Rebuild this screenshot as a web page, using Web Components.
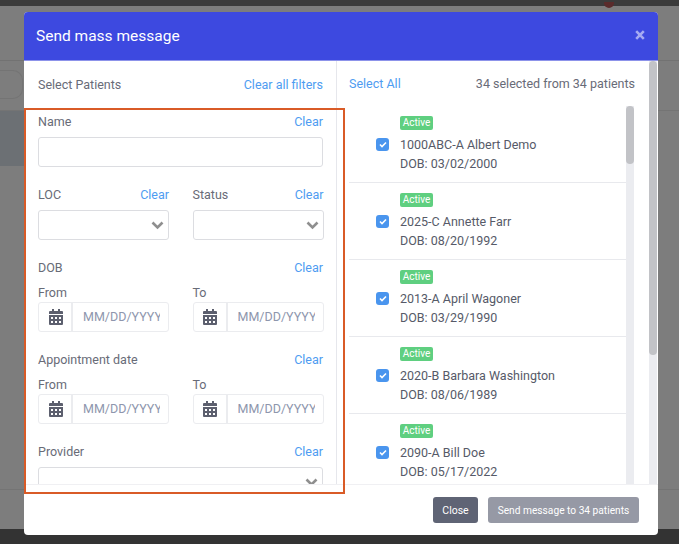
<!DOCTYPE html>
<html>
<head>
<meta charset="utf-8">
<style>
  html, body { margin: 0; padding: 0; }
  body { font-family: Roboto, "Liberation Sans", sans-serif; font-size: 12.5px; color: #686b77; }
</style>
</head>
<body>
<mass-page>
  <mass-modal>
    <filter-field slot="name-field" label="Name"><select-box plain></select-box></filter-field>
    <filter-field slot="pair-fields" label="LOC"><select-box></select-box></filter-field>
    <filter-field slot="pair-fields" label="Status"><select-box></select-box></filter-field>
    <filter-field slot="rest" label="DOB"><date-range></date-range></filter-field>
    <filter-field slot="rest" label="Appointment date"><date-range></date-range></filter-field>
    <filter-field slot="rest" label="Provider"><select-box></select-box></filter-field>
    <patient-row slot="patients" code="1000ABC-A Albert Demo" dob="03/02/2000"></patient-row>
    <patient-row slot="patients" code="2025-C Annette Farr" dob="08/20/1992"></patient-row>
    <patient-row slot="patients" code="2013-A April Wagoner" dob="03/29/1990"></patient-row>
    <patient-row slot="patients" code="2020-B Barbara Washington" dob="08/06/1989"></patient-row>
    <patient-row slot="patients" code="2090-A Bill Doe" dob="05/17/2022"></patient-row>
  </mass-modal>
</mass-page>

<script>
// dimmed page behind the dialog
class MassPage extends HTMLElement {
  constructor() {
    super()
    this.attachShadow({mode: "open"}).innerHTML = `
    <style>
      :host { display: flex; flex-direction: column; position: relative; width: 679px; height: 544px; overflow: hidden; background: #7d7d7d; }
      .top { height: 6px; flex: none; background: #3b3b3b; }
      .row1 { height: 54px; flex: none; border-bottom: 1px solid #727272; }
      .row2 { height: 40px; flex: none; border-bottom: 1px solid #747474; padding-top: 9px; box-sizing: content-box; }
      .pill { width: 23px; height: 29px; box-sizing: border-box; border: 1px solid #747474; border-left: 0; border-radius: 0 10px 10px 0; }
      .row3 { height: 55px; width: 24px; flex: none; background: #6c7074; }
      .fill { flex: 1; }
      .row4 { height: 39px; flex: none; border-top: 1px solid #747474; }
      .bottom { height: 15px; flex: none; background: #333; }
      .dot { position: absolute; top: 2px; left: 604px; width: 10px; height: 6px; border-radius: 0 0 5px 5px; background: #5a2b2b; }
    </style>
    <div class="top"></div>
    <div class="row1"></div>
    <div class="row2"><div class="pill"></div></div>
    <div class="row3"></div>
    <div class="fill"></div>
    <div class="row4"></div>
    <div class="bottom"></div>
    <div class="dot"></div>
    <slot></slot>
    `
  }
}

class MassModal extends HTMLElement {
  constructor() {
    super()
    this.attachShadow({mode: "open"}).innerHTML = `
    <style>
      * { box-sizing: border-box; }
      :host { display: flex; flex-direction: column; position: absolute; left: 24px; top: 12px; width: 634px; height: 523px; background: #fff; border-radius: 4px; overflow: hidden; }
      a { color: #4e9cf1; }
      header { height: 49px; flex: none; background: #3d49e0; color: #fff; font-size: 15.5px; display: flex; justify-content: space-between; align-items: center; padding: 0 13px 0 12px; border-bottom: 1px solid #8d93ea; }
      header svg { display: block; margin-top: -3px; }
      main { flex: 1; min-height: 0; display: flex; }
      .left { width: 313px; flex: none; border-right: 1px solid #e6e7ec; display: flex; flex-direction: column; }
      .bar { height: 47px; flex: none; display: flex; justify-content: space-between; align-items: center; }
      .left .bar { padding: 0 13px 1px 14px; }
      .filters { flex: 1; min-height: 0; overflow: hidden; padding: 3px 13px 0 14px; }
      .pair { display: grid; grid-template-columns: 131px 131px; gap: 23.5px; }
      .right { flex: 1; min-width: 0; display: flex; flex-direction: column; }
      .right .bar { height: 45px; padding: 0 14px 0 12px; }
      .list-wrap { flex: 1; min-height: 0; display: flex; }
      .list { width: 277px; margin-left: 12px; overflow: hidden; flex: none; }
      .track { width: 8px; flex: none; background: #ebecf0; }
      .track i { display: block; height: 58px; border-radius: 4px; background: #c2c3c7; }
      .outer { width: 8px; margin-right: 1px; flex: none; background: #ebecf0; }
      .outer i { display: block; height: 294px; border-radius: 4px; background: #c2c3c7; }
      footer { height: 51px; flex: none; border-top: 1px solid #f0f0f3; display: flex; justify-content: flex-end; align-items: flex-start; gap: 10px; padding: 12px 19px 0 0; }
      .btn { height: 26px; border-radius: 3px; color: #fff; font-size: 10.5px; white-space: nowrap; display: flex; align-items: center; justify-content: center; }
      .close { width: 45px; background: #5f6475; }
      .send { width: 151px; background: #9699a5; font-size: 10.2px; }
      .orange { position: absolute; left: 0; top: 96px; width: 321px; height: 386px; border: 2px solid #d95b27; pointer-events: none; }
    </style>
    <header>
      <span>Send mass message</span>
      <svg width="10" height="10" viewBox="0 0 10 10"><path d="M1.2 1.2l7.6 7.6M8.8 1.2l-7.6 7.6" stroke="#a5aaf2" stroke-width="2.6" fill="none"/></svg>
    </header>
    <main>
      <section class="left">
        <div class="bar"><span>Select Patients</span><a>Clear all filters</a></div>
        <div class="filters">
          <slot name="name-field"></slot>
          <div class="pair"><slot name="pair-fields"></slot></div>
          <slot name="rest"></slot>
        </div>
      </section>
      <section class="right">
        <div class="bar"><a>Select All</a><span>34 selected from 34 patients</span></div>
        <div class="list-wrap">
          <div class="list"><slot name="patients"></slot></div>
          <div class="track"><i></i></div>
        </div>
      </section>
      <div class="outer"><i></i></div>
    </main>
    <footer>
      <div class="btn close">Close</div>
      <div class="btn send">Send message to 34 patients</div>
    </footer>
    <div class="orange"></div>
    `
  }
}

class FilterField extends HTMLElement {
  constructor() {
    super()
    this.attachShadow({mode: "open"})
  }

  connectedCallback() {
    this.shadowRoot.innerHTML = `
    <style>
      :host { display: block; margin-bottom: 17px; }
      .head { height: 20px; display: flex; justify-content: space-between; align-items: center; margin-bottom: 6px; }
      a { color: #4e9cf1; }
    </style>
    <div class="head"><span>${this.getAttribute("label")}</span><a>Clear</a></div>
    <slot></slot>
    `
  }
}

class SelectBox extends HTMLElement {
  constructor() {
    super()
    this.attachShadow({mode: "open"})
  }

  connectedCallback() {
    const arrow = this.hasAttribute("plain") ? "" : `<svg width="13" height="9" viewBox="0 0 13 9"><path d="M1.5 1.5l5 5 5-5" stroke="#8f8f8f" stroke-width="2.6" fill="none"/></svg>`
    this.shadowRoot.innerHTML = `
    <style>
      :host { display: block; }
      .box { height: 30px; box-sizing: border-box; border: 1px solid #dcdde1; border-radius: 3px; background: #fff; display: flex; align-items: center; justify-content: flex-end; padding-right: 4px; }
    </style>
    <div class="box">${arrow}</div>
    `
  }
}

class DateInput extends HTMLElement {
  constructor() {
    super()
    this.attachShadow({mode: "open"})
  }

  connectedCallback() {
    this.shadowRoot.innerHTML = `
    <style>
      * { box-sizing: border-box; }
      :host { display: block; }
      .lab { height: 19px; line-height: 19px; }
      .box { height: 30px; border: 1px solid #ebecef; border-radius: 3px; display: flex; }
      .ic { width: 34px; flex: none; padding-left: 1px; border-right: 2px solid #ebecef; display: flex; align-items: center; justify-content: center; }
      .val { width: 77px; margin-left: 10px; overflow: hidden; white-space: nowrap; line-height: 28px; color: #8e96ad; }
    </style>
    <div class="lab">${this.getAttribute("label")}</div>
    <div class="box">
      <div class="ic"><svg width="14" height="16" viewBox="0 0 14 16"><path fill="#5c5f6e" d="M3 0h2v2h4V0h2v2h2a1 1 0 0 1 1 1v2H0V3a1 1 0 0 1 1-1h2zM0 6h14v9a1 1 0 0 1-1 1H1a1 1 0 0 1-1-1zm2 2v2h2V8zm4 0v2h2V8zm4 0v2h2V8zm-8 4v2h2v-2zm4 0v2h2v-2zm4 0v2h2v-2z"/></svg></div>
      <div class="val">MM/DD/YYYY</div>
    </div>
    `
  }
}

class DateRange extends HTMLElement {
  constructor() {
    super()
    this.attachShadow({mode: "open"}).innerHTML = `
    <style>
      :host { display: grid; grid-template-columns: 131px 131px; gap: 23.5px; }
    </style>
    <date-input label="From"></date-input>
    <date-input label="To"></date-input>
    `
  }
}

class PatientRow extends HTMLElement {
  constructor() {
    super()
    this.attachShadow({mode: "open"})
  }

  connectedCallback() {
    this.shadowRoot.innerHTML = `
    <style>
      :host { display: flex; height: 77px; box-sizing: border-box; border-bottom: 1px solid #e8e9ed; }
      .check { width: 13px; height: 13px; margin: 32px 0 0 27px; flex: none; border-radius: 3px; background: #4a95ee; display: flex; align-items: center; justify-content: center; }
      .text { margin-left: 11px; padding-top: 10px; color: #565a68; line-height: 19px; }
      .badge { display: block; width: 33px; height: 14px; border-radius: 2px; background: #5fcf80; color: #fff; font-size: 10px; line-height: 14px; text-align: center; margin-bottom: 5px; }
    </style>
    <div class="check"><svg width="8" height="7" viewBox="0 0 8 7"><path d="M1 3.5l2 2 4-4" stroke="#fff" stroke-width="1.6" fill="none"/></svg></div>
    <div class="text">
      <span class="badge">Active</span>
      <div>${this.getAttribute("code")}</div>
      <div>DOB: ${this.getAttribute("dob")}</div>
    </div>
    `
  }
}

customElements.define("mass-page", MassPage)
customElements.define("mass-modal", MassModal)
customElements.define("filter-field", FilterField)
customElements.define("select-box", SelectBox)
customElements.define("date-input", DateInput)
customElements.define("date-range", DateRange)
customElements.define("patient-row", PatientRow)
</script>
</body>
</html>
